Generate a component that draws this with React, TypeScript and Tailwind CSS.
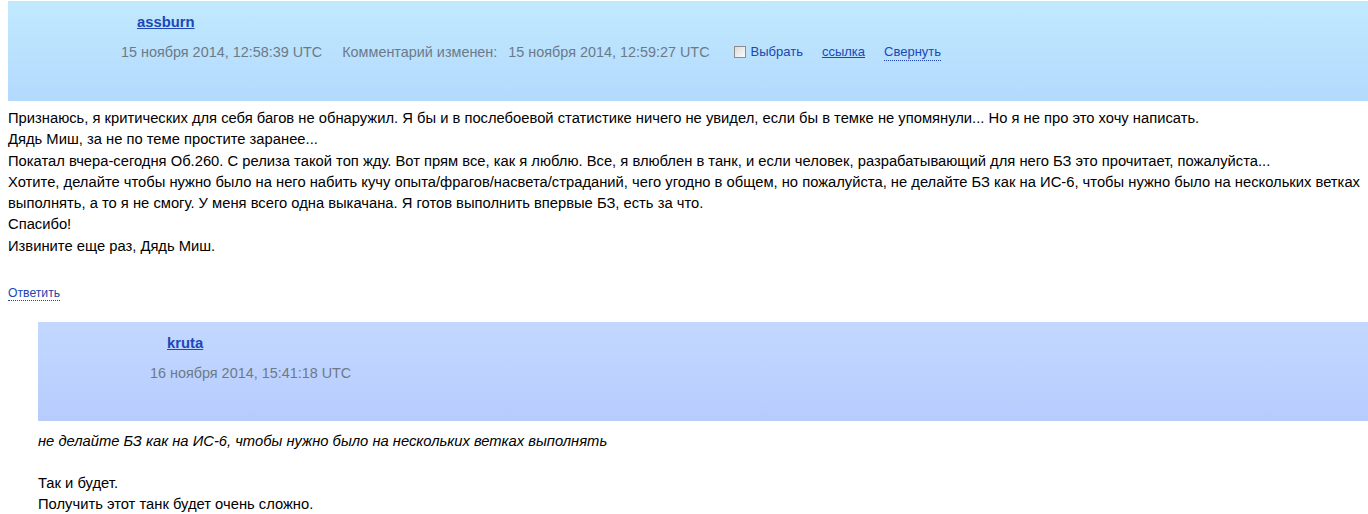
function Meta({ children }: { children: React.ReactNode }) {
  return <span className="text-[#6c7a88] text-[14.4px]">{children}</span>;
}

function CommentHeader({
  author,
  authorPad,
  metaPad,
  children,
  tone,
}: {
  author: string;
  authorPad: string;
  metaPad: string;
  children: React.ReactNode;
  tone: "sky" | "blue";
}) {
  return (
    <div
      className={
        tone === "sky"
          ? "h-[100px] bg-gradient-to-b from-[#c1e9fe] to-[#b3dafd]"
          : "h-[99px] bg-gradient-to-b from-[#c3d8ff] to-[#b7ccfd]"
      }
    >
      <div className={`pt-[10px] ${authorPad}`}>
        <a className="font-bold text-[#1b48b8] underline text-[14.8px] leading-[20px]">{author}</a>
      </div>
      <div className={`mt-[9px] flex items-center leading-[20px] ${metaPad}`}>
        {children}
      </div>
    </div>
  );
}

export default function App() {
  return (
    <div className="bg-white min-h-[514px] pt-px pl-2 font-['Liberation_Sans',Arial,sans-serif] text-[14.75px] text-black">
      <CommentHeader author="assburn" authorPad="pl-[129px]" metaPad="pl-[113px]" tone="sky">
        <Meta>15 ноября 2014, 12:58:39 UTC</Meta>
        <span className="ml-[20px]">
          <Meta>Комментарий изменен:</Meta>
        </span>
        <span className="ml-[11px]">
          <Meta>15 ноября 2014, 12:59:27 UTC</Meta>
        </span>
        <label className="ml-[24px] flex items-center text-[13px] text-[#2146b0]">
          <span className="inline-block w-[12px] h-[12px] border border-[#8c8c8c] bg-gradient-to-br from-[#dcdcdc] to-[#fbfbfb] mr-[5px]" />
          Выбрать
        </label>
        <a className="ml-[19px] text-[13px] text-[#1b48b8] underline">ссылка</a>
        <a className="ml-[19px] text-[13px] text-[#1b48b8] border-b border-dotted border-[#1b48b8] leading-[17px]">Свернуть</a>
      </CommentHeader>

      <div className="pt-[7px] leading-[21.3px]">
        <p>
          Признаюсь, я критических для себя багов не обнаружил. Я бы и в послебоевой статистике ничего не увидел, если бы в темке не упомянули... Но я не про это хочу написать.
        </p>
        <p>Дядь Миш, за не по теме простите заранее...</p>
        <p>
          Покатал вчера-сегодня Об.260. С релиза такой топ жду. Вот прям все, как я люблю. Все, я влюблен в танк, и если человек, разрабатывающий для него БЗ это прочитает, пожалуйста...
        </p>
        <p>
          Хотите, делайте чтобы нужно было на него набить кучу опыта/фрагов/насвета/страданий, чего угодно в общем, но пожалуйста, не делайте БЗ как на ИС-6, чтобы нужно было на нескольких ветках выполнять, а то я не смогу. У меня всего одна выкачана. Я готов выполнить впервые БЗ, есть за что.
        </p>
        <p>Спасибо!</p>
        <p>Извините еще раз, Дядь Миш.</p>
      </div>

      <div className="mt-[29px] text-[12.2px] leading-[15px]">
        <a className="text-[#2146b0] border-b border-dotted border-[#2146b0]">Ответить</a>
      </div>

      <div className="ml-[30px] mt-[21px]">
        <CommentHeader author="kruta" authorPad="pl-[129px]" metaPad="pl-[112px]" tone="blue">
          <Meta>16 ноября 2014, 15:41:18 UTC</Meta>
        </CommentHeader>
        <div className="pt-[10px] leading-[21px]">
          <p className="italic">не делайте БЗ как на ИС-6, чтобы нужно было на нескольких ветках выполнять</p>
          <p>&nbsp;</p>
          <p>Так и будет.</p>
          <p>Получить этот танк будет очень сложно.</p>
        </div>
      </div>
    </div>
  );
}
